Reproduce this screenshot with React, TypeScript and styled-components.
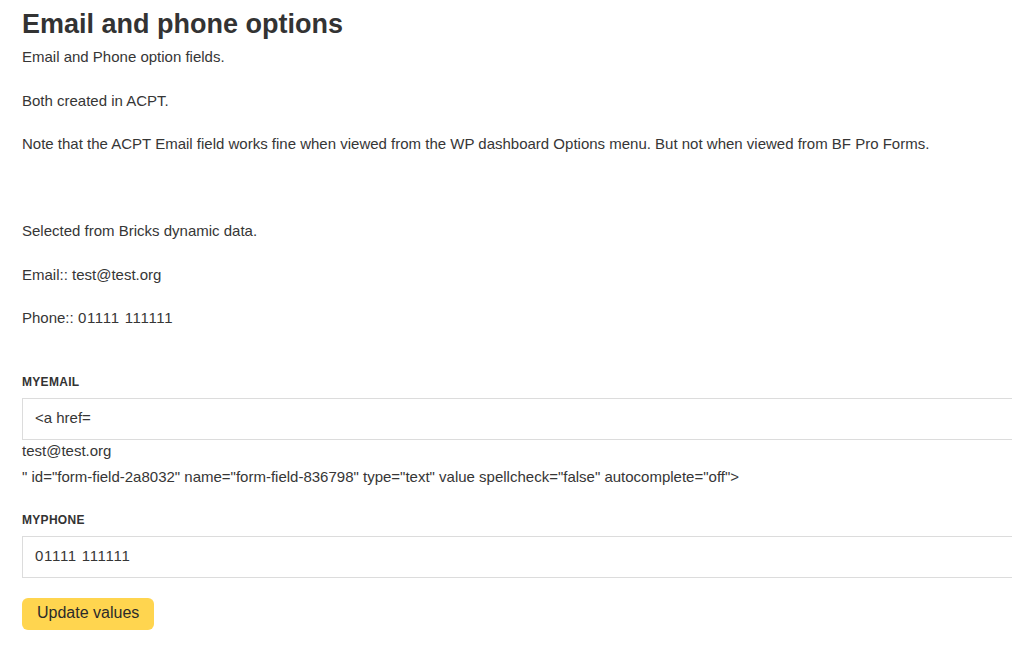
import React from "react";
import styled, { createGlobalStyle } from "styled-components";

const Global = createGlobalStyle`
  html, body { margin: 0; padding: 0; background: #fff; overflow: hidden; }
  body {
    font-family: "Liberation Sans", Arial, sans-serif;
    color: #363636;
  }
  * { box-sizing: border-box; }
`;

const Page = styled.main`
  padding: 6px 0 0 22px;
  width: 1200px;
`;

const Title = styled.h1`
  font-size: 27px;
  font-weight: 700;
  line-height: 36px;
  margin: 0 0 4px;
  color: #333;
`;

const Para = styled.p`
  font-size: 15px;
  line-height: 22px;
  margin: 0 0 21.5px;
  min-height: 22px;
`;

const Num = styled.span`
  letter-spacing: 0.7px;
`;

const Form = styled.form`
  display: flex;
  flex-direction: column;
  margin-top: 45px;
`;

const Label = styled.label`
  font-size: 12px;
  font-weight: 700;
  text-transform: uppercase;
  letter-spacing: 0.3px;
  color: #333;
  line-height: 16px;
  margin-bottom: 8px;
`;

const InputBox = styled.div`
  height: 42px;
  width: 1100px;
  border: 1px solid #dcdcdc;
  padding: 0 12px 3px;
  display: flex;
  align-items: center;
  font-size: 15px;
  color: #363636;
`;

const Spill = styled.span<{ $lead?: boolean }>`
  display: block;
  font-size: 15px;
  line-height: 26px;
  margin-top: ${(p) => (p.$lead ? -2 : 0)}px;
`;

const Field = styled.div<{ $gap: number }>`
  display: flex;
  flex-direction: column;
  margin-bottom: ${(p) => p.$gap}px;
`;

const Button = styled.button`
  align-self: flex-start;
  background: #ffd54f;
  border: none;
  border-radius: 6px;
  height: 32px;
  padding: 0 15px 3px;
  font-family: "Liberation Sans", Arial, sans-serif;
  font-size: 16px;
  color: #2b2b2b;
  cursor: pointer;
`;

export default function App() {
  return (
    <>
      <Global />
      <Page>
        <Title>Email and phone options</Title>
        <Para>Email and Phone option fields.</Para>
        <Para>Both created in ACPT.</Para>
        <Para>
          Note that the ACPT Email field works fine when viewed from the WP dashboard Options menu. But not when viewed
          from BF Pro Forms.
        </Para>
        <Para>&nbsp;</Para>
        <Para>Selected from Bricks dynamic data.</Para>
        <Para>Email:: test@test.org</Para>
        <Para>
          Phone:: <Num>01111 111111</Num>
        </Para>
        <Form onSubmit={(e) => e.preventDefault()}>
          <Field $gap={22}>
            <Label>myemail</Label>
            <InputBox>&lt;a href=</InputBox>
            <Spill $lead>test@test.org</Spill>
            <Spill>
              " id="form-field-2a8032" name="form-field-836798" type="text" value spellcheck="false"
              autocomplete="off"&gt;
            </Spill>
          </Field>
          <Field $gap={20}>
            <Label>myphone</Label>
            <InputBox>
              <Num>01111 111111</Num>
            </InputBox>
          </Field>
          <Button type="submit">Update values</Button>
        </Form>
      </Page>
    </>
  );
}
